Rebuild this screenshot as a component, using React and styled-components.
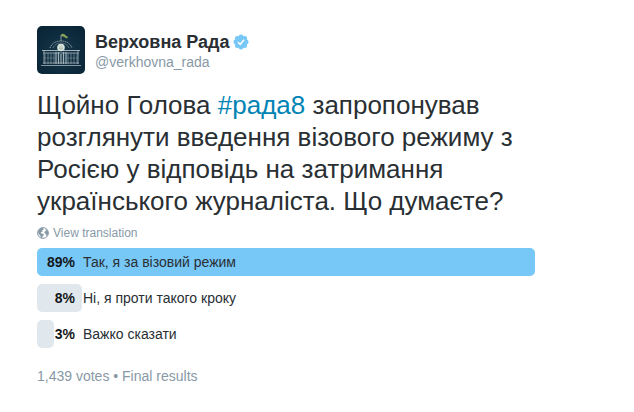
import React from "react";
import styled, { createGlobalStyle } from "styled-components";

const GlobalStyle = createGlobalStyle`
  *, *::before, *::after { box-sizing: border-box; }
  body {
    margin: 0;
    background: #fff;
    color: #292f33;
    font-family: "Liberation Sans", Arial, sans-serif;
    font-size: 14px;
    line-height: 20px;
  }
`;

const Tweet = styled.article`
  padding: 26px 37px 24px;
`;

const Header = styled.header`
  display: flex;
  align-items: flex-start;
  gap: 10px;
`;

const Avatar = styled.svg`
  display: block;
  flex: none;
  width: 48px;
  height: 48px;
`;

const Author = styled.a`
  padding-top: 5px;
  color: #8899a6;
  text-decoration: none;
`;

const NameLine = styled.span`
  display: flex;
  align-items: center;
  gap: 3px;
`;

const Name = styled.strong`
  color: #292f33;
  font-size: 18px;
  line-height: 22px;
`;

const Badge = styled.svg`
  width: 16px;
  height: 16px;
`;

const Handle = styled.span`
  display: block;
  line-height: 18px;
`;

const Message = styled.p`
  margin: 15px 0 0;
  max-width: 500px;
  font-size: 26px;
  line-height: 32px;
`;

const Hashtag = styled.a`
  color: #0084b4;
  text-decoration: none;
`;

const TranslateButton = styled.button`
  display: flex;
  align-items: center;
  gap: 4px;
  margin: 7px 0 0;
  padding: 0;
  border: 0;
  background: none;
  color: #8899a6;
  font: inherit;
  font-size: 12px;
  line-height: 18px;
`;

const Globe = styled.svg`
  width: 12px;
  height: 12px;
`;

const Poll = styled.ul`
  display: grid;
  gap: 8px;
  margin: 6px 0 0;
  padding: 0;
  list-style: none;
`;

const Choice = styled.li`
  display: flex;
  align-items: center;
  gap: 8px;
  height: 28px;
  position: relative;
  isolation: isolate;
`;

const Bar = styled.span`
  position: absolute;
  inset: 0 auto 0 0;
  z-index: -1;
  border-radius: 5px;
  background: ${({ $winner }) => ($winner ? "#77c7f7" : "#e1e8ed")};
`;

const Percent = styled.strong`
  width: 38px;
  color: #14171a;
  text-align: right;
`;

const Label = styled.span`
  color: #292f33;
`;

const Footer = styled.footer`
  margin-top: 18px;
  color: #8899a6;
`;

const choices = [
  { percent: 89, label: "Так, я за візовий режим", winner: true },
  { percent: 8, label: "Ні, я проти такого кроку" },
  { percent: 3, label: "Важко сказати" },
];

const columns = [8, 11, 14, 17, 31, 34, 37, 40];

function ParliamentAvatar() {
  return (
    <Avatar viewBox="0 0 48 48" role="img" aria-label="Верховна Рада">
      <defs>
        <radialGradient id="night" cx="50%" cy="55%" r="70%">
          <stop offset="0" stopColor="#17384c" />
          <stop offset="1" stopColor="#082334" />
        </radialGradient>
      </defs>
      <rect width="48" height="48" rx="5" fill="url(#night)" />
      <g fill="none" stroke="#a3b3ba" strokeWidth="0.8">
        <path d="M13 22c2-5 6-7 11-7s9 2 11 7" strokeDasharray="1.4 0.6" />
        <path d="M16 22c2-4 5-5 8-5s6 1 8 5" opacity="0.6" />
        <path d="M24 15V9" />
        <path d="M5 24.500h38" strokeWidth="1.200" />
        <path d="M6 27h36M7 25v13M41 25v13M4 39.500h40M6 37h36" />
        <path d="M19 26v12M21.500 26v12M24 28v10M26.500 26v12M29 26v12" strokeWidth="1.200" />
        {columns.map((x) => (
          <path key={x} d={`M${x} 27v11`} opacity="0.7" />
        ))}
        <path d="M7 32h11M30 32h11" opacity="0.45" />
      </g>
      <path d="M24 8.500c3-2 4 1 7 2.500l-1 1.500c-3-1-4-3-6-2z" fill="#8ba357" />
      <circle cx="24" cy="21.500" r="3.800" fill="#dce5df" />
      <path d="M24 19v5M22.500 20.500v2.500h3v-2.500" fill="none" stroke="#9aada3" strokeWidth="0.6" />
    </Avatar>
  );
}

function VerifiedBadge() {
  return (
    <Badge viewBox="0 0 16 16" role="img" aria-label="Verified account">
      <g fill="#77c7f7">
        <circle cx="8" cy="8" r="6" />
        <circle cx="8" cy="2.800" r="2.400" />
        <circle cx="11.700" cy="4.300" r="2.400" />
        <circle cx="13.200" cy="8" r="2.400" />
        <circle cx="11.700" cy="11.700" r="2.400" />
        <circle cx="8" cy="13.200" r="2.400" />
        <circle cx="4.300" cy="11.700" r="2.400" />
        <circle cx="2.800" cy="8" r="2.400" />
        <circle cx="4.300" cy="4.300" r="2.400" />
      </g>
      <path d="M5 8.300l2.200 2.100 3.800-4.600" fill="none" stroke="#fff" strokeWidth="1.500" />
    </Badge>
  );
}

function GlobeIcon() {
  return (
    <Globe viewBox="0 0 12 12" aria-hidden="true">
      <circle cx="6" cy="6" r="5.400" fill="#fff" stroke="#8899a6" strokeWidth="1" />
      <path d="M1 4l2-2.700L6 .8l.8 1.400-1.500 1 .3 1.200-1.900.8.8 1.300 2 .5.3 1.300-1.300 1.200-.3 1.700-1.400-.6-.5-2.200L1.500 7zM8 1.500l2.500 1.800.8 2.400-.8 2.600-1.200.8-.6-2L7.300 5.800 8 4.200l1.200-.4z" fill="#8899a6" />
    </Globe>
  );
}

export default function App() {
  return (
    <>
      <GlobalStyle />
      <Tweet>
        <Header>
          <ParliamentAvatar />
          <Author href="#verkhovna_rada">
            <NameLine>
              <Name>Верховна Рада</Name>
              <VerifiedBadge />
            </NameLine>
            <Handle>@verkhovna_rada</Handle>
          </Author>
        </Header>
        <Message lang="uk">
          Щойно Голова <Hashtag href="#рада8">#рада8</Hashtag> запропонував
          розглянути введення візового режиму з Росією у відповідь на
          затримання українського журналіста. Що думаєте?
        </Message>
        <TranslateButton type="button">
          <GlobeIcon />
          View translation
        </TranslateButton>
        <Poll lang="uk">
          {choices.map(({ percent, label, winner }) => (
            <Choice key={label}>
              <Bar $winner={winner} style={{ width: `${percent}%` }} />
              <Percent>{percent}%</Percent>
              <Label>{label}</Label>
            </Choice>
          ))}
        </Poll>
        <Footer>1,439 votes • Final results</Footer>
      </Tweet>
    </>
  );
}
